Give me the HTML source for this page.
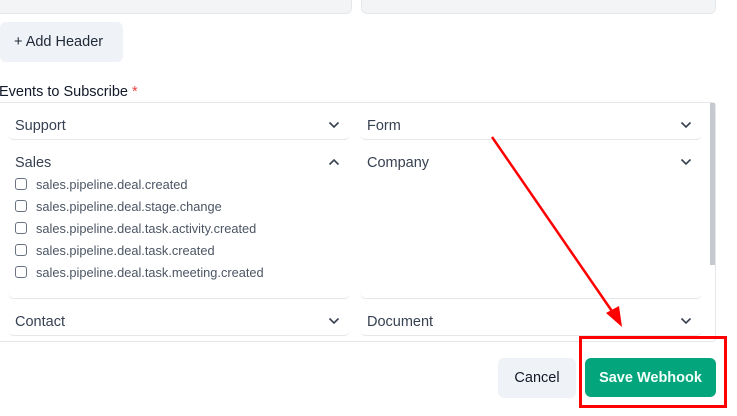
<!DOCTYPE html>
<html><head><style>
*{box-sizing:border-box;margin:0;padding:0}
body{width:737px;height:416px;overflow:hidden;background:#fff;font-family:"Liberation Sans",Arial,sans-serif;position:relative;color:#374151}
.a{position:absolute}
.inp{background:#f3f4f6;border:1px solid #e5e7eb;border-radius:6px}
.row{position:absolute;height:30px;border-bottom:1px solid #e5e7eb;border-radius:0 0 6px 6px;font-size:14.5px;color:#374151}
.row span{position:absolute;left:7px;top:8px}
.chev{position:absolute;right:10px;top:11px}
.cb{position:absolute;left:15px;width:12px;height:12px;border:1px solid #6b7280;border-radius:3px}
.ct{position:absolute;left:36px;font-size:12.8px;color:#4b5563}
</style></head><body>
<div class="a inp" style="left:-10px;top:-10px;width:362px;height:24px"></div>
<div class="a inp" style="left:361px;top:-10px;width:355px;height:24px"></div>
<div class="a" style="left:0;top:22px;width:123px;height:40px;background:#eff2f6;border-radius:6px;font-size:14.5px;color:#1f2937;line-height:41px;padding-left:14px">+ Add Header</div>
<div class="a" style="left:-1px;top:84px;font-size:14.5px;color:#111827">Events to Subscribe <span style="color:#ef4444">*</span></div>
<div class="a" style="left:0;top:102px;width:716px;height:240px;border:1px solid #e5e7eb;border-left:none;border-radius:0 4px 4px 0"></div>
<div class="a" style="left:710px;top:103px;width:5px;height:162px;background:#c6cad0"></div>

<div class="row" style="left:8px;top:110px;width:342px"><span>Support</span><svg class="chev" width="12" height="8" viewBox="0 0 12 8"><path d="M1.5 1.5L6 6l4.5-4.5" fill="none" stroke="#374151" stroke-width="1.6"/></svg></div>
<div class="row" style="left:360px;top:110px;width:342px"><span>Form</span><svg class="chev" width="12" height="8" viewBox="0 0 12 8"><path d="M1.5 1.5L6 6l4.5-4.5" fill="none" stroke="#374151" stroke-width="1.6"/></svg></div>

<div class="row" style="left:8px;top:147px;width:342px;height:152px"><span>Sales</span><svg class="chev" width="12" height="8" viewBox="0 0 12 8"><path d="M1.5 6.5L6 2l4.5 4.5" fill="none" stroke="#374151" stroke-width="1.6"/></svg></div>
<div class="row" style="left:360px;top:147px;width:342px;height:152px"><span>Company</span><svg class="chev" width="12" height="8" viewBox="0 0 12 8"><path d="M1.5 1.5L6 6l4.5-4.5" fill="none" stroke="#374151" stroke-width="1.6"/></svg></div>

<div class="cb" style="top:178px"></div><div class="ct" style="top:177px">sales.pipeline.deal.created</div>
<div class="cb" style="top:200px"></div><div class="ct" style="top:199px">sales.pipeline.deal.stage.change</div>
<div class="cb" style="top:222px"></div><div class="ct" style="top:221px">sales.pipeline.deal.task.activity.created</div>
<div class="cb" style="top:244px"></div><div class="ct" style="top:243px">sales.pipeline.deal.task.created</div>
<div class="cb" style="top:266px"></div><div class="ct" style="top:265px">sales.pipeline.deal.task.meeting.created</div>

<div class="row" style="left:8px;top:306px;width:342px"><span>Contact</span><svg class="chev" width="12" height="8" viewBox="0 0 12 8"><path d="M1.5 1.5L6 6l4.5-4.5" fill="none" stroke="#374151" stroke-width="1.6"/></svg></div>
<div class="row" style="left:360px;top:306px;width:342px"><span>Document</span><svg class="chev" width="12" height="8" viewBox="0 0 12 8"><path d="M1.5 1.5L6 6l4.5-4.5" fill="none" stroke="#374151" stroke-width="1.6"/></svg></div>

<div class="a" style="left:498px;top:358px;width:78px;height:40px;background:#eff2f6;border-radius:6px;font-size:14.5px;color:#111827;text-align:center;line-height:41px">Cancel</div>
<div class="a" style="left:585px;top:358px;width:131px;height:39px;background:#03a67c;border-radius:6px;font-size:14.5px;font-weight:bold;color:#f3fffb;text-align:center;line-height:41px">Save Webhook</div>

<svg class="a" style="left:0;top:0" width="737" height="416">
<rect x="580.5" y="337.5" width="145" height="69" fill="none" stroke="#f00" stroke-width="3"/>
<line x1="492" y1="137" x2="616" y2="317" stroke="#f00" stroke-width="2.5"/>
<path d="M606 313L622 327L619 306Z" fill="#f00"/>
</svg>
</body></html>
